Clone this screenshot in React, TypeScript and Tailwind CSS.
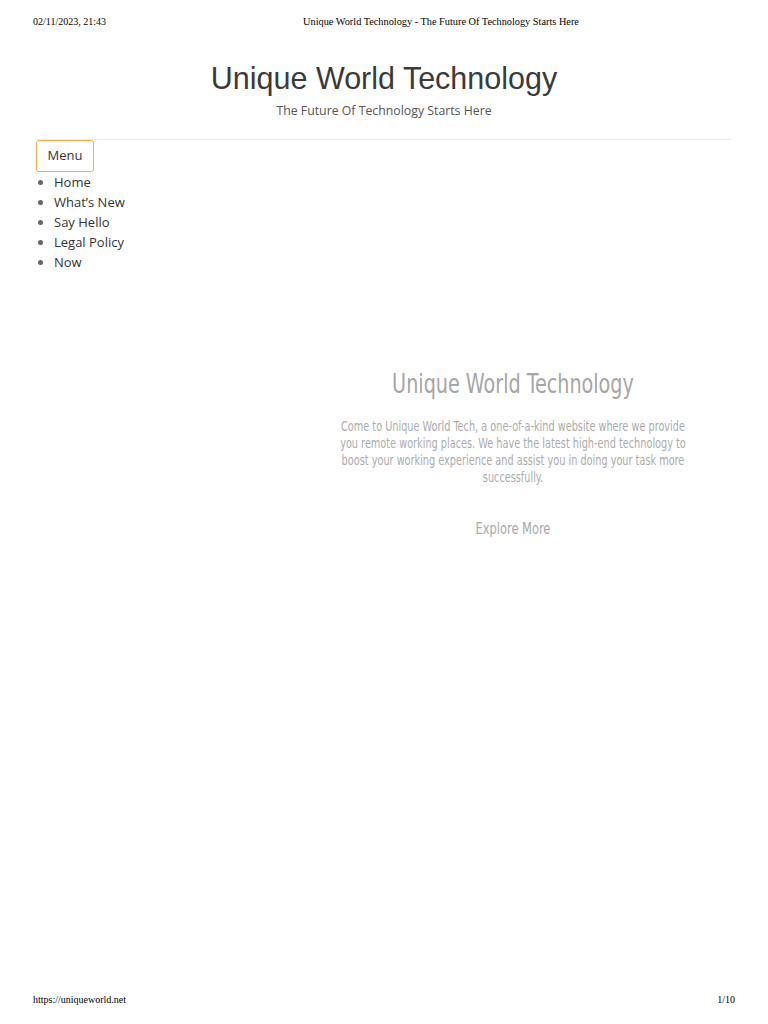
export default function App() {
  const links = ['Home', 'What’s New', 'Say Hello', 'Legal Policy', 'Now'];

  return (
    <div className="min-h-[1024px] flex flex-col bg-white">
      {/* print header */}
      <div className="flex items-center px-[33px] pt-[16px] text-[10px] leading-[12px] text-black font-['Liberation_Serif',serif]">
        <span className="w-[190px]">02/11/2023, 21:43</span>
        <span className="flex-1 text-center pr-[76px] text-[10.3px]">
          Unique World Technology - The Future Of Technology Starts Here
        </span>
      </div>

      {/* site header */}
      <header className="mx-[36px] mt-[33px] border-b border-[#ececec] pb-[20px] text-center">
        <h1 className="text-[30.5px] leading-[34px] text-[#3a3a3a] font-['Liberation_Sans',Arial,sans-serif]">
          Unique World Technology
        </h1>
        <p className="mt-[8px] text-[12.3px] leading-[16px] text-[#555] font-['Open_Sans',sans-serif]">
          The Future Of Technology Starts Here
        </p>
      </header>

      {/* nav */}
      <nav className="mx-[36px] font-['Open_Sans',sans-serif] text-[#333]">
        <div className="w-[58px] h-[32px] flex items-center justify-center rounded-[3px] border border-[#f5b04a] text-[13px]">
          Menu
        </div>
        <ul className="list-disc pl-[18px] marker:text-[#666]">
          {links.map((l) => (
            <li key={l} className="text-[13px] leading-[20px]">
              {l}
            </li>
          ))}
        </ul>
      </nav>

      {/* hero */}
      <section className="flex pl-[340px] mt-[96px]">
        <div className="w-[346px] flex justify-center">
          <div className="w-[424px] shrink-0 scale-x-[0.82] text-center font-['DejaVu_Sans_Condensed',sans-serif] [font-stretch:condensed]">
            <h2 className="text-[26px] leading-[32px] text-[#a6a6a6]">Unique World Technology</h2>
            <p className="mt-[18px] text-[13.2px] leading-[17px] text-[#ababab]">
              Come to Unique World Tech, a one-of-a-kind website where we provide you remote working places. We have
              the latest high-end technology to boost your working experience and assist you in doing your task more
              successfully.
            </p>
            <div className="mt-[33px] text-[15.5px] leading-[20px] text-[#a8a8a8]">Explore More</div>
          </div>
        </div>
      </section>

      {/* print footer */}
      <div className="mt-auto flex justify-between px-[33px] pb-[18px] text-[10px] leading-[12px] text-black font-['Liberation_Serif',serif]">
        <span>https://uniqueworld.net</span>
        <span>1/10</span>
      </div>
    </div>
  );
}
